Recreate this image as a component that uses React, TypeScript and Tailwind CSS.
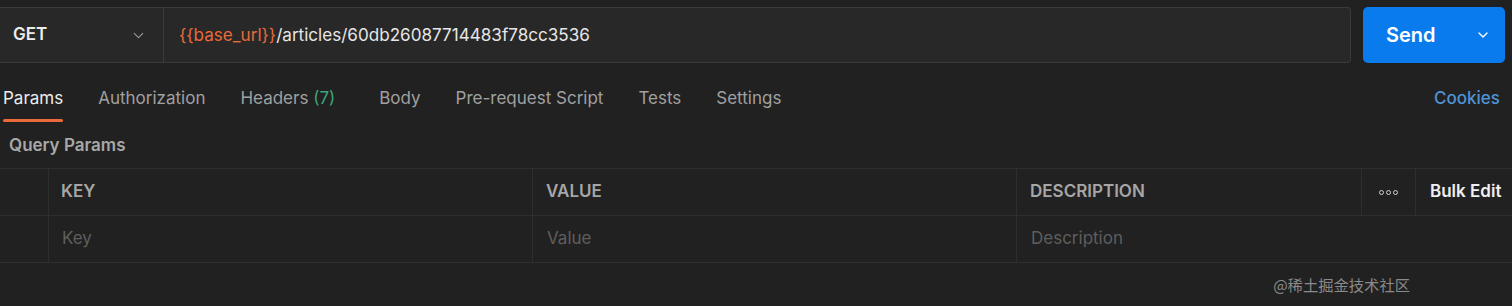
import { ChevronDown } from 'lucide-react';

const tabs = ['Params', 'Authorization', 'Headers', 'Body', 'Pre-request Script', 'Tests', 'Settings'];

export default function App() {
    return (
        <div
            className="w-[1512px] h-[306px] bg-[#212121] overflow-hidden relative text-[#e6e6e6]"
            style={{ fontFamily: 'Inter, "Noto Sans", sans-serif' }}
        >
            {/* Request bar */}
            <div className="flex items-stretch pt-[7px] h-[63px]">
                <div className="w-[164px] flex items-center justify-between pl-[13px] pr-[16px] bg-[#282828] border-y border-r border-[#3a3a3a]">
                    <span className="text-[17px] font-semibold text-[#ececec]">GET</span>
                    <ChevronDown className="w-[17px] h-[17px] text-[#9a9a9a]" strokeWidth={1.6} />
                </div>
                <div className="w-[1187px] flex items-center pl-[15px] bg-[#282828] border-y border-r border-[#3a3a3a] rounded-r-[4px] text-[17.1px]">
                    <span className="text-[#ea6a3b]">{'{{base_url}}'}</span>
                    <span className="text-[#e6e6e6]">/articles/60db26087714483f78cc3536</span>
                </div>
                <div className="ml-[12px] w-[142px] flex items-center justify-between pl-[23px] pr-[14px] bg-[#097bed] rounded-[5px]">
                    <span className="text-[20px] font-semibold text-white">Send</span>
                    <ChevronDown className="w-[16px] h-[16px] text-white" strokeWidth={2} />
                </div>
            </div>

            {/* Tabs */}
            <div className="flex items-start justify-between h-[60px] pl-[3px] pr-[12px]">
                <div className="flex gap-[35px] pt-[24px]">
                    {tabs.map((t, i) => (
                        <div key={t} className={`flex flex-col ${t === 'Headers' ? 'mr-[9px]' : ''}`}>
                            <span className={`text-[17px] leading-[22px] ${i === 0 ? 'text-[#ececec]' : 'text-[#a0a0a0]'}`}>
                                {t}
                                {t === 'Headers' && <span className="text-[#3fa37a]"> (7)</span>}
                            </span>
                            {i === 0 && <div className="mt-[10px] h-[3px] bg-[#ea6a3b] rounded-full" />}
                        </div>
                    ))}
                </div>
                <span className="pt-[24px] text-[17px] leading-[22px] font-medium text-[#4f93d6]">Cookies</span>
            </div>

            {/* Query params label */}
            <div className="h-[45px] flex items-start pl-[9px] pt-[10px]">
                <span className="text-[17px] font-semibold text-[#a8a8a8]">Query Params</span>
            </div>

            {/* Table */}
            <div className="border-t border-[#2e2e2e]">
                <div className="flex h-[47px] border-b border-[#2e2e2e] text-[17px] font-semibold text-[#a6a6a6]">
                    <div className="w-[49px] border-r border-[#2e2e2e]" />
                    <div className="w-[484px] border-r border-[#2e2e2e] flex items-center pl-[12px]">KEY</div>
                    <div className="w-[484px] border-r border-[#2e2e2e] flex items-center pl-[13px]">VALUE</div>
                    <div className="w-[345px] border-r border-[#2e2e2e] flex items-center pl-[13px]">DESCRIPTION</div>
                    <div className="w-[54px] border-r border-[#2e2e2e] flex items-center justify-center">
                        <span className="flex gap-[2px]">
                            {[0, 1, 2].map((d) => (
                                <span key={d} className="w-[5px] h-[5px] rounded-full border border-[#cfcfcf]" />
                            ))}
                        </span>
                    </div>
                    <div className="flex-1 flex items-center pl-[14px] text-[#f0f0f0]">Bulk Edit</div>
                </div>
                <div className="flex h-[47px] border-b border-[#2e2e2e] text-[17px] text-[#5e5e5e]">
                    <div className="w-[49px] border-r border-[#2e2e2e]" />
                    <div className="w-[484px] border-r border-[#2e2e2e] flex items-center pl-[13px]">Key</div>
                    <div className="w-[484px] border-r border-[#2e2e2e] flex items-center pl-[14px]">Value</div>
                    <div className="flex-1 flex items-center pl-[14px]">Description</div>
                </div>
            </div>

            {/* Watermark */}
            <div
                className="absolute right-[102px] top-[273px] text-[15.3px] text-[#8a8a8a]"
                style={{ fontFamily: '"Noto Sans CJK SC", sans-serif' }}
            >
                @稀土掘金技术社区
            </div>
        </div>
    );
}
